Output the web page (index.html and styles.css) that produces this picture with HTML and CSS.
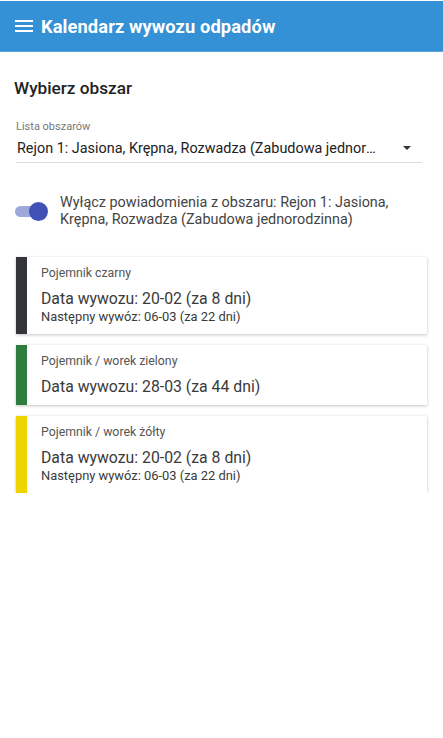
FILE: index.html
```html
<!DOCTYPE html>
<html lang="pl">
<head>
<meta charset="utf-8">
<title>Kalendarz wywozu odpadów</title>
<link rel="stylesheet" href="styles.css">
</head>
<body>
<header class="appbar">
  <svg class="menu-icon" width="18" height="14" viewBox="0 0 18 14"><rect x="0" y="1" width="18" height="2" fill="#fff"/><rect x="0" y="6" width="18" height="2" fill="#fff"/><rect x="0" y="11" width="18" height="2" fill="#fff"/></svg>
  <h1 class="title">Kalendarz wywozu odpadów</h1>
</header>
<main class="content">
  <h2 class="section-title">Wybierz obszar</h2>
  <div class="field">
    <label class="field-label">Lista obszarów</label>
    <div class="select">
      <span class="select-value">Rejon 1: Jasiona, Krępna, Rozwadza (Zabudowa jednorodzinna)</span>
      <span class="select-arrow"></span>
    </div>
  </div>
  <div class="toggle-row">
    <div class="switch"><span class="switch-track"></span><span class="switch-knob"></span></div>
    <div class="toggle-text">Wyłącz powiadomienia z obszaru: Rejon 1: Jasiona, Krępna, Rozwadza (Zabudowa jednorodzinna)</div>
  </div>
  <div class="cards">
    <div class="card">
      <div class="card-bar bar-black"></div>
      <div class="card-body">
        <div class="card-title">Pojemnik czarny</div>
        <div class="card-date">Data wywozu: 20-02 (za 8 dni)</div>
        <div class="card-next">Następny wywóz: 06-03 (za 22 dni)</div>
      </div>
    </div>
    <div class="card">
      <div class="card-bar bar-green"></div>
      <div class="card-body">
        <div class="card-title">Pojemnik / worek zielony</div>
        <div class="card-date">Data wywozu: 28-03 (za 44 dni)</div>
      </div>
    </div>
    <div class="card">
      <div class="card-bar bar-yellow"></div>
      <div class="card-body">
        <div class="card-title">Pojemnik / worek żółty</div>
        <div class="card-date">Data wywozu: 20-02 (za 8 dni)</div>
        <div class="card-next">Następny wywóz: 06-03 (za 22 dni)</div>
      </div>
    </div>
  </div>
</main>
</body>
</html>
```
FILE: styles.css
```css
* { box-sizing: border-box; }
html, body { margin: 0; padding: 0; background: #fff; }
body {
  font-family: Roboto, "Liberation Sans", Arial, sans-serif;
  color: #333;
  padding-top: 1px;
}
.appbar {
  height: 51px;
  background: #3491d5;
  border-bottom: 1px solid #5aa7df;
  display: flex;
  align-items: center;
  padding-left: 15px;
  gap: 8px;
}
.menu-icon { display: block; flex: none; }
.title {
  margin: 0;
  color: #fff;
  font-size: 18.3px;
  font-weight: 700;
  letter-spacing: 0.1px;
}
.content { padding: 26px 16px 0 14px; }
.section-title {
  margin: 0;
  font-size: 17.2px;
  font-weight: 500;
  color: #222;
  line-height: 20px;
}
.field { margin-top: 22px; padding-left: 2px; padding-right: 5px; }
.field-label { display: block; font-size: 11px; color: #777; line-height: 13px; }
.select {
  display: flex;
  align-items: center;
  height: 30px;
  border-bottom: 1px solid #ddd;
  padding-left: 1px;
}
.select-value {
  flex: 1;
  min-width: 0;
  white-space: nowrap;
  overflow: hidden;
  text-overflow: ellipsis;
  font-size: 14.4px;
  color: #222;
  padding-right: 20px;
  padding-top: 1px;
}
.select-arrow {
  width: 0; height: 0;
  border-left: 4px solid transparent;
  border-right: 4px solid transparent;
  border-top: 4px solid #333;
  margin-right: 11px;
}
.toggle-row {
  display: flex;
  align-items: center;
  margin-top: 31px;
  padding-left: 1px;
}
.switch { position: relative; width: 34px; height: 20px; flex: none; margin-right: 11px; }
.switch-track {
  position: absolute; left: 0; top: 5px;
  width: 30px; height: 11px; border-radius: 6px;
  background: #9fa8da;
}
.switch-knob {
  position: absolute; left: 14px; top: 1px;
  width: 19px; height: 19px; border-radius: 50%;
  background: #3f51b5;
}
.toggle-text { font-size: 14.4px; line-height: 17px; color: #444; }
.cards {
  margin-top: 29px;
  padding-left: 2px;
  display: flex;
  flex-direction: column;
  gap: 11px;
}
.card {
  display: flex;
  background: #fff;
  box-shadow: 0 1px 3px rgba(0,0,0,0.22), 0 0 1px rgba(0,0,0,0.08);
  width: 411px;
}
.card-bar { width: 11px; flex: none; }
.bar-black { background: #333538; }
.bar-green { background: #2e7d3e; }
.bar-yellow { background: #f0d400; }
.card-body { padding: 7px 10px 8px 14px; }
.card-title { font-size: 12.3px; color: #555; line-height: 18px; }
.card-date { font-size: 15.8px; color: #3a3a3a; line-height: 20px; margin-top: 7px; }
.card-next { font-size: 12.9px; color: #3a3a3a; line-height: 15px; padding-bottom: 2px; }
```
